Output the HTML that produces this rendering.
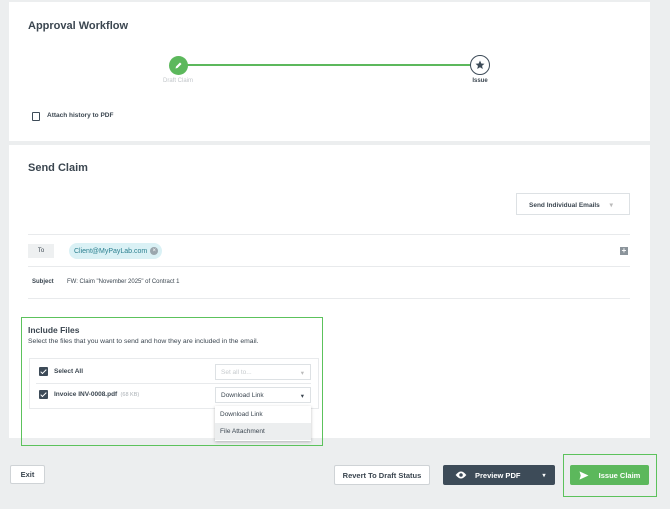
<!DOCTYPE html>
<html><head><meta charset="utf-8"><style>
*{box-sizing:border-box;margin:0;padding:0}
body{width:670px;height:509px;background:#eceeef;font-family:"Liberation Sans",sans-serif;color:#3b4650;position:relative;overflow:hidden}
.a{position:absolute}
.card{background:#fff}
.t{white-space:nowrap}
.cb{position:absolute;width:9px;height:9px;background:#3d4b58;border-radius:1px}
.cb:after{content:"";position:absolute;left:3px;top:1px;width:2px;height:5px;border:solid #fff;border-width:0 1.3px 1.3px 0;transform:rotate(45deg)}
.dd{position:absolute;border:1px solid #dde1e4;background:#fff;font-size:6.5px;white-space:nowrap}
.btn{position:absolute;border-radius:2px;font-size:7.5px;font-weight:bold;display:flex;align-items:center;justify-content:center;white-space:nowrap}
</style></head><body>
<div class="a card" style="left:9px;top:2px;width:641px;height:139px"></div>
<div class="a card" style="left:9px;top:145px;width:641px;height:293px"></div>

<div class="a t" style="left:28px;top:20px;font-size:11px;font-weight:bold">Approval Workflow</div>
<div class="a" style="left:186px;top:64px;width:286px;height:2px;background:#5cb85c"></div>
<div class="a" style="left:169px;top:56px;width:19px;height:19px;border-radius:50%;background:#5cb85c"></div>
<svg class="a" style="left:173px;top:60px" width="11" height="11" viewBox="0 0 11 11"><path d="M2.5 8.5 L3 6.5 L7 2.5 L8.5 4 L4.5 8 Z" fill="#fff"/></svg>
<div class="a" style="left:470px;top:55px;width:20px;height:20px;border-radius:50%;border:1.3px solid #3d4b58;background:#fff"></div>
<svg class="a" style="left:474px;top:59px" width="12" height="12" viewBox="0 0 24 24"><path d="M12 3l2.6 6 6.4.5-4.9 4.2 1.5 6.3L12 16.6 6.4 20l1.5-6.3L3 9.5l6.4-.5z" fill="#3d4b58"/></svg>
<div class="a t" style="left:158px;top:78px;width:40px;text-align:center;font-size:6px;color:#c2c6ca">Draft Claim</div>
<div class="a t" style="left:465px;top:78px;width:30px;text-align:center;font-size:6px;font-weight:bold">Issue</div>
<div class="a" style="left:32px;top:112px;width:8px;height:9px;border:1.2px solid #3d4b58;border-radius:1px"></div>
<div class="a t" style="left:47px;top:112px;font-size:6.5px;font-weight:bold">Attach history to PDF</div>

<div class="a t" style="left:28px;top:162px;font-size:11px;font-weight:bold">Send Claim</div>
<div class="dd" style="left:516px;top:193px;width:114px;height:22px;font-weight:bold;font-size:6.5px;padding:7px 0 0 12px">Send Individual Emails <span style="color:#bbb;margin-left:8px">▾</span></div>
<div class="a" style="left:28px;top:234px;width:602px;height:1px;background:#e8eaec"></div>
<div class="a" style="left:28px;top:244px;width:26px;height:14px;background:#eef0f1;font-size:6px;text-align:center;line-height:14px">To</div>
<div class="a t" style="left:69px;top:243px;height:16px;border-radius:8px;background:#daf1f5;color:#2a7f8f;font-size:7px;display:flex;align-items:center;padding:0 4px 0 5px">Client@MyPayLab.com<span style="display:block;margin-left:3px;width:8px;height:8px;border-radius:50%;background:#9aa6ad;color:#fff;font-size:6px;line-height:8px;text-align:center">×</span></div>
<div class="a" style="left:620px;top:247px;width:8px;height:8px;background:#8b949b;color:#fff;font-size:8px;line-height:8px;text-align:center;font-weight:bold">+</div>
<div class="a" style="left:28px;top:266px;width:602px;height:1px;background:#e8eaec"></div>
<div class="a t" style="left:32px;top:279px;font-size:6px;font-weight:bold">Subject</div>
<div class="a t" style="left:67px;top:279px;font-size:6px">FW: Claim "November 2025" of Contract 1</div>
<div class="a" style="left:28px;top:298px;width:602px;height:1px;background:#e8eaec"></div>

<div class="a" style="left:21px;top:317px;width:302px;height:129px;border:1.5px solid #5cc25c"></div>
<div class="a t" style="left:28px;top:325px;font-size:8.5px;font-weight:bold">Include Files</div>
<div class="a t" style="left:28px;top:338px;font-size:6.8px">Select the files that you want to send and how they are included in the email.</div>
<div class="a" style="left:29px;top:358px;width:290px;height:51px;border:1px solid #e8eaec"></div>
<div class="cb" style="left:39px;top:367px"></div>
<div class="a t" style="left:54px;top:368px;font-size:6.5px;font-weight:bold">Select All</div>
<div class="dd" style="left:215px;top:364px;width:96px;height:16px;color:#c7cbce;padding:4px 0 0 5px">Set all to...<span style="position:absolute;right:6px;color:#bbb">▾</span></div>
<div class="a" style="left:36px;top:383px;width:275px;height:1px;background:#e8eaec"></div>
<div class="cb" style="left:39px;top:390px"></div>
<div class="a t" style="left:54px;top:391px;font-size:6.5px;font-weight:bold">Invoice INV-0008.pdf <span style="font-weight:normal;color:#aab0b5;font-size:5.5px">&nbsp;(68 KB)</span></div>
<div class="dd" style="left:215px;top:387px;width:96px;height:16px;padding:4px 0 0 5px">Download Link<span style="position:absolute;right:6px">▾</span></div>
<div class="a" style="left:215px;top:406px;width:96px;height:35px;background:#fff;box-shadow:0 1px 3px rgba(0,0,0,.25);font-size:6.5px">
<div style="height:17px;line-height:18px;padding-left:5px">Download Link</div>
<div style="height:17px;line-height:17px;padding-left:5px;background:#eceeef">File Attachment</div></div>

<div class="btn" style="left:10px;top:465px;width:35px;height:19px;background:#fff;border:1px solid #cfd3d6">Exit</div>
<div class="btn" style="left:334px;top:465px;width:96px;height:20px;background:#fff;border:1px solid #cfd3d6">Revert To Draft Status</div>
<div class="btn" style="left:443px;top:465px;width:112px;height:20px;background:#3d4b58;color:#fff;justify-content:flex-start;padding-left:12px">
<svg width="12" height="8" viewBox="0 0 24 16"><path d="M12 1C6 1 2 8 1 8c1 0 5 7 11 7s10-7 11-7c-1 0-5-7-11-7z" fill="#fff"/><circle cx="12" cy="8" r="3.5" fill="#3d4b58"/></svg>
<span style="margin-left:8px">Preview PDF</span><span style="margin-left:22px;font-size:6px">▾</span></div>
<div class="a" style="left:563px;top:454px;width:94px;height:43px;border:1.5px solid #5cc25c"></div>
<div class="btn" style="left:570px;top:465px;width:79px;height:20px;background:#5cb85c;color:#fff">
<svg width="10" height="9" viewBox="0 0 24 22"><path d="M1 1l22 10L1 21l3-10z" fill="#fff"/></svg><span style="margin-left:10px">Issue Claim</span></div>
</body></html>
